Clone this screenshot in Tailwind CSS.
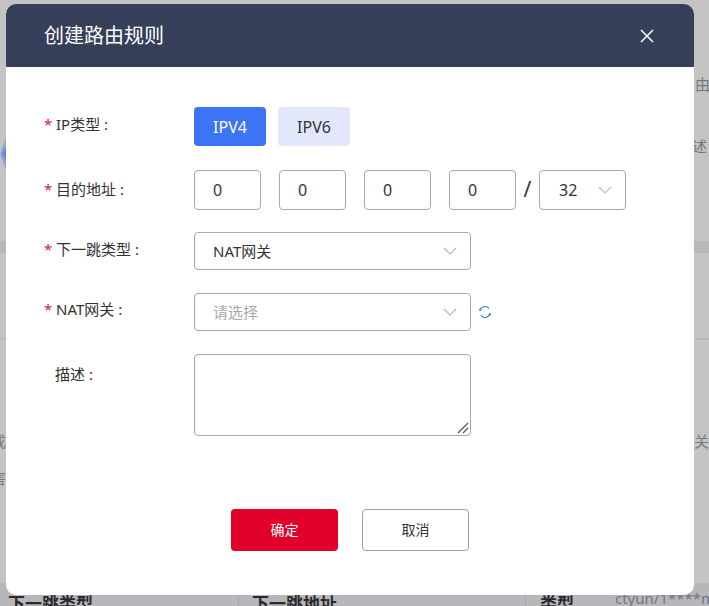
<!DOCTYPE html>
<html lang="zh-CN">

<head>
    <meta charset="UTF-8">
    <meta name="viewport" content="width=device-width, initial-scale=1.0">
    <title>创建路由规则</title>
    <script src="https://cdn.jsdelivr.net/npm/@tailwindcss/browser@4"></script>
</head>

<body>
    <div class="relative w-[709px] h-[606px] overflow-hidden bg-[#c4c4c4] font-['Noto_Sans','Noto_Sans_CJK_SC',sans-serif]">
        <!-- Page behind the overlay -->
        <div class="absolute left-0 top-[241px] w-full h-[12px] bg-[#b8b8bb]"></div>
        <div class="absolute left-0 top-[338px] w-full h-[2px] bg-[#b8b8bb]"></div>
        <svg class="absolute left-0 top-[138px] w-[6px] h-[32px]" viewBox="0 0 6 32">
            <path d="M6 0L0 16l6 16z" fill="#8fa3d6" />
            <path d="M6 9L2 16l4 7z" fill="#6f87cc" />
        </svg>
        <span class="absolute left-[695px] top-[73px] text-[15px] text-[#77777c]">由</span>
        <span class="absolute left-[692px] top-[135px] text-[15px] text-[#77777c]">述</span>
        <span class="absolute -left-[9px] top-[430px] text-[15px] text-[#77777c]">成</span>
        <span class="absolute left-[694px] top-[430px] text-[15px] text-[#77777c]">关</span>
        <span class="absolute -left-[9px] top-[467px] text-[15px] text-[#77777c]">害</span>
        <div class="absolute left-0 top-[583px] w-full h-[23px] bg-[#b6b6bb]"></div>
        <div class="absolute left-[238px] top-[590px] w-px h-[16px] bg-[#a5a5aa]"></div>
        <div class="absolute left-[525px] top-[590px] w-px h-[16px] bg-[#a5a5aa]"></div>
        <span class="absolute left-[8px] top-[592px] text-[17px] leading-[24px] font-bold text-[#2a2a2e]">下一跳类型</span>
        <span class="absolute left-[252px] top-[592px] text-[17px] leading-[24px] font-bold text-[#2a2a2e]">下一跳地址</span>
        <span class="absolute left-[540px] top-[592px] text-[17px] leading-[24px] font-bold text-[#2a2a2e]">类型</span>
        <span class="absolute left-[615px] top-[588px] text-[15px] leading-[20px] text-[#77777c]">ctyun/1****m</span>

        <!-- Dialog -->
        <div class="absolute left-[6px] top-[4px] w-[688px] h-[591px] bg-white rounded-[10px] overflow-hidden">
            <div class="h-[63px] bg-[#353f5a] flex items-center justify-between pl-[38px] pr-[40px]">
                <div class="text-[20px] leading-[28px] text-white">创建路由规则</div>
                <svg class="w-[14px] h-[14px] text-white" viewBox="0 0 14 14" fill="none" stroke="currentColor" stroke-width="1.5">
                    <path d="M1 1l12 12M13 1L1 13" />
                </svg>
            </div>

            <div class="pt-[40px] pl-[38px] text-[15px] text-[#333]">
                <!-- IP type -->
                <div class="flex h-[39px] mb-[24px]">
                    <label class="w-[150px] flex leading-[34px] whitespace-pre"><span class="w-[12px] text-[#d6204e]">*</span>IP类型 :</label>
                    <div class="flex gap-[12px]">
                        <button class="w-[72px] h-[39px] rounded-[4px] bg-[#3d73f5] text-white text-[16px]">IPV4</button>
                        <button class="w-[72px] h-[39px] rounded-[4px] bg-[#e2e8f9] text-[#333] text-[16px]">IPV6</button>
                    </div>
                </div>

                <!-- Destination -->
                <div class="flex h-[40px] mb-[22px]">
                    <label class="w-[150px] flex leading-[38px] whitespace-pre"><span class="w-[12px] text-[#d6204e]">*</span>目的地址 :</label>
                    <div class="flex items-center text-[16px]">
                        <div class="w-[67px] h-[40px] mr-[18px] border border-[#a8a8a8] rounded-[4px] pl-[18px] leading-[38px]">0</div>
                        <div class="w-[67px] h-[40px] mr-[18px] border border-[#a8a8a8] rounded-[4px] pl-[18px] leading-[38px]">0</div>
                        <div class="w-[67px] h-[40px] mr-[18px] border border-[#a8a8a8] rounded-[4px] pl-[18px] leading-[38px]">0</div>
                        <div class="w-[67px] h-[40px] border border-[#a8a8a8] rounded-[4px] pl-[18px] leading-[38px]">0</div>
                        <span class="w-[23px] text-center text-[21px]">/</span>
                        <div class="w-[87px] h-[40px] border border-[#a8a8a8] rounded-[4px] pl-[19px] pr-[13px] flex items-center justify-between">
                            <span>32</span>
                            <svg class="w-[14px] h-[8px] text-[#c0c0c0]" viewBox="0 0 14 8" fill="none" stroke="currentColor" stroke-width="1.2">
                                <path d="M1 1l6 6 6-6" />
                            </svg>
                        </div>
                    </div>
                </div>

                <!-- Next hop type -->
                <div class="flex h-[38px] mb-[23px]">
                    <label class="w-[150px] flex leading-[34px] whitespace-pre"><span class="w-[12px] text-[#d6204e]">*</span>下一跳类型 :</label>
                    <div class="w-[277px] h-[38px] border border-[#a8a8a8] rounded-[4px] pl-[18px] pr-[13px] flex items-center justify-between">
                        <span>NAT网关</span>
                        <svg class="w-[14px] h-[8px] text-[#b8b8b8]" viewBox="0 0 14 8" fill="none" stroke="currentColor" stroke-width="1.2">
                            <path d="M1 1l6 6 6-6" />
                        </svg>
                    </div>
                </div>

                <!-- NAT gateway -->
                <div class="flex h-[38px] mb-[23px]">
                    <label class="w-[150px] flex leading-[32px] whitespace-pre"><span class="w-[12px] text-[#d6204e]">*</span>NAT网关 :</label>
                    <div class="w-[277px] h-[38px] border border-[#a8a8a8] rounded-[4px] pl-[18px] pr-[13px] flex items-center justify-between text-[#a8a8a8]">
                        <span>请选择</span>
                        <svg class="w-[14px] h-[8px] text-[#b8b8b8]" viewBox="0 0 14 8" fill="none" stroke="currentColor" stroke-width="1.2">
                            <path d="M1 1l6 6 6-6" />
                        </svg>
                    </div>
                    <svg class="w-[12px] h-[12px] ml-[8px] mt-[13px] text-[#4a78e8]" viewBox="0 0 12 12" fill="none" stroke="currentColor" stroke-width="1.2">
                        <path d="M1 5A5 5 0 0 1 10 2.6" />
                        <path d="M11 7A5 5 0 0 1 2 9.4" />
                        <circle cx="1.2" cy="3.6" r="1.1" fill="currentColor" stroke="none" />
                        <circle cx="10.8" cy="8.4" r="1.1" fill="currentColor" stroke="none" />
                    </svg>
                </div>

                <!-- Description -->
                <div class="flex h-[82px]">
                    <label class="w-[150px] pl-[11px] leading-[40px] whitespace-pre">描述 :</label>
                    <div class="relative w-[277px] h-[82px] border border-[#a8a8a8] rounded-[4px]">
                        <svg class="absolute right-[1px] bottom-[1px] w-[12px] h-[12px] text-[#555]" viewBox="0 0 12 12" fill="none" stroke="currentColor" stroke-width="1.3">
                            <path d="M1 11L11 1M6 11l5-5" />
                        </svg>
                    </div>
                </div>

                <!-- Footer -->
                <div class="flex gap-[24px] mt-[73px] ml-[187px]">
                    <button class="w-[107px] h-[42px] pb-[2px] rounded-[4px] bg-[#e1002a] text-white text-[14px]">确定</button>
                    <button class="w-[107px] h-[42px] pb-[2px] rounded-[4px] border border-[#a0a0a0] bg-white text-[#333] text-[14px]">取消</button>
                </div>
            </div>
        </div>
    </div>
</body>

</html>
